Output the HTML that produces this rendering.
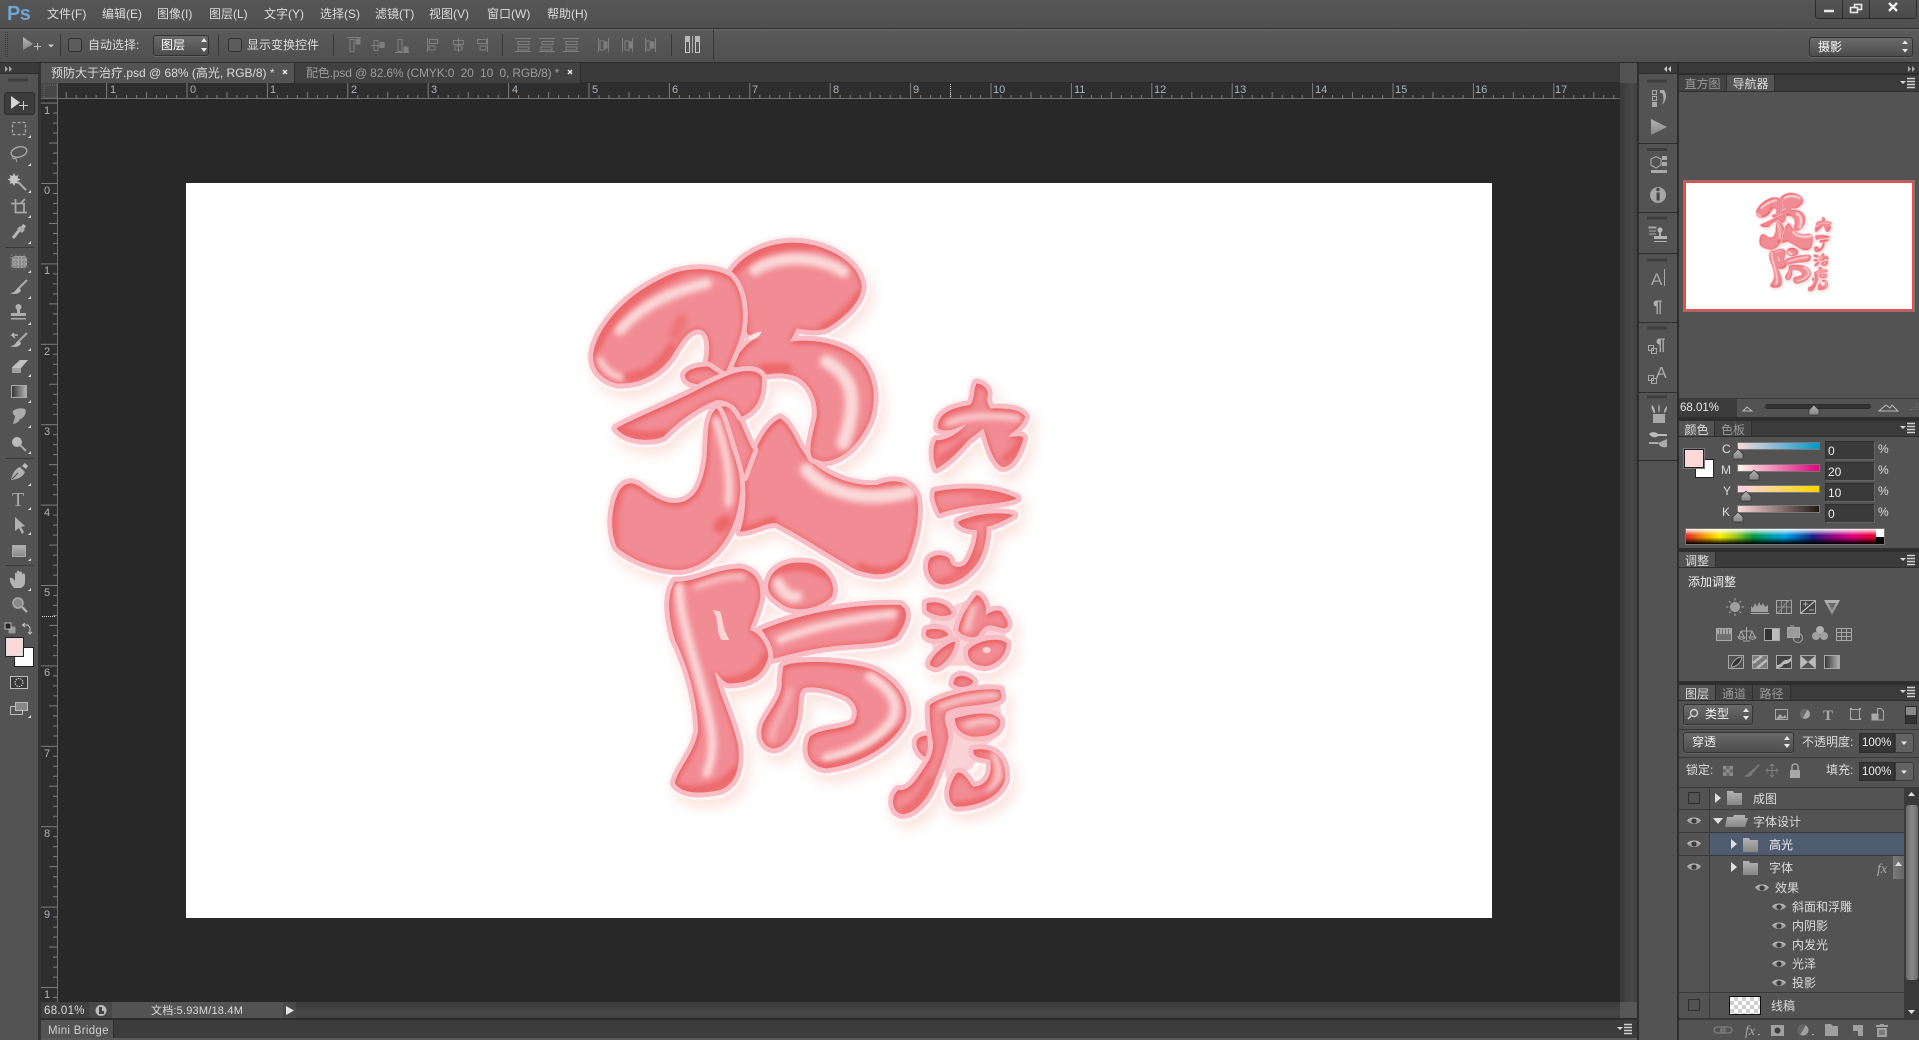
<!DOCTYPE html>
<html lang="zh"><head><meta charset="utf-8"><title>Photoshop</title>
<style>
html,body{margin:0;padding:0;background:#535353;width:1919px;height:1040px;overflow:hidden}
body{position:relative;font:12px/14px "Liberation Sans","WenQuanYi Zen Hei","Noto Sans CJK SC",sans-serif;color:#dcdcdc}
.a{position:absolute;box-sizing:border-box}
.t{position:absolute;white-space:pre;line-height:14px;height:14px}
.sel{position:absolute;box-sizing:border-box;border:1px solid #333;border-radius:3px;background:linear-gradient(#6a6a6a,#4d4d4d);box-shadow:0 1px 0 #666}
.cb{position:absolute;box-sizing:border-box;width:14px;height:14px;border:1px solid #2f2f2f;border-radius:3px;background:#5c5c5c}
.inp{position:absolute;box-sizing:border-box;background:#3a3a3a;border:1px solid #2f2f2f;border-bottom-color:#666;border-right-color:#666}
.tab{position:absolute;height:100%;top:0;box-sizing:border-box;border-right:1px solid #2e2e2e;text-align:center;line-height:18px;color:#9a9a9a;background:#434343}
.tab.on{background:#535353;color:#dedede}
.strip{position:absolute;left:1679px;width:240px;background:#3b3b3b;border-top:1px solid #2d2d2d;border-bottom:1px solid #2d2d2d;box-sizing:border-box}
.ln{position:absolute;background:#3a3a3a}
.o{fill:#f8bcc4;stroke:#f8bcc4;stroke-width:30;stroke-linejoin:round}
.f{fill:#f28c94;filter:url(#bv)}
.h{fill:#fff4f4;stroke:#fff4f4;stroke-width:48;stroke-linejoin:round}
.sd{fill:#f2a090;stroke:#f2a090;stroke-width:44;stroke-linejoin:round}
.fl{fill:#fad3d7;stroke:#f9cdd2;stroke-width:14;stroke-linejoin:round}
.L{fill:none;stroke:#fbd8d8;stroke-linecap:round;filter:url(#s1)}
.D{fill:none;stroke:#ec6668;stroke-linecap:round;filter:url(#s1)}
svg text{font-family:"Liberation Sans",sans-serif}
</style></head><body>

<!-- top bars -->
<div class="a" style="left:0;top:0;width:1919px;height:28px;background:linear-gradient(#565656,#505050)"></div>
<div class="a" style="left:0;top:28px;width:1919px;height:1px;background:#2e2e2e"></div>
<div class="a" style="left:0;top:29px;width:1919px;height:33px;background:linear-gradient(#5a5a5a,#505050);border-top:1px solid #686868"></div>
<div class="a" style="left:0;top:62px;width:1919px;height:1px;background:#2b2b2b"></div>

<div class="t" style="left:7px;top:2px;height:24px;font:bold 20px/24px 'Liberation Sans',sans-serif;color:#6fa3d4;letter-spacing:-.6px">Ps</div>
<div class="t" style="left:47px;top:7px">文件(F)</div>
<div class="t" style="left:102px;top:7px">编辑(E)</div>
<div class="t" style="left:157px;top:7px">图像(I)</div>
<div class="t" style="left:209px;top:7px">图层(L)</div>
<div class="t" style="left:264px;top:7px">文字(Y)</div>
<div class="t" style="left:320px;top:7px">选择(S)</div>
<div class="t" style="left:375px;top:7px">滤镜(T)</div>
<div class="t" style="left:429px;top:7px">视图(V)</div>
<div class="t" style="left:487px;top:7px">窗口(W)</div>
<div class="t" style="left:547px;top:7px">帮助(H)</div>

<!-- window buttons -->
<div class="a" style="left:1815px;top:-2px;width:102px;height:21px;border:1px solid #2c2c2c;border-radius:3px;background:linear-gradient(#555,#4a4a4a)"></div>
<div class="a" style="left:1842px;top:0;width:1px;height:18px;background:#2c2c2c"></div>
<div class="a" style="left:1869px;top:0;width:1px;height:18px;background:#2c2c2c"></div>

<!-- option bar -->
<div class="cb" style="left:68px;top:38px"></div>
<div class="t" style="left:88px;top:38px">自动选择:</div>
<div class="sel" style="left:153px;top:35px;width:56px;height:21px"></div>
<div class="t" style="left:161px;top:38px;color:#fff">图层</div>
<div class="cb" style="left:228px;top:38px"></div>
<div class="t" style="left:247px;top:38px">显示变换控件</div>
<div class="sel" style="left:1809px;top:37px;width:104px;height:20px"></div>
<div class="t" style="left:1818px;top:40px;color:#fff">摄影</div>

<!-- left tools column -->
<div class="a" style="left:0;top:63px;width:38px;height:977px;background:#535353"></div>
<div class="a" style="left:0;top:63px;width:38px;height:11px;background:#3a3a3a;border-bottom:1px solid #2d2d2d"></div>
<div class="a" style="left:38px;top:63px;width:3px;height:977px;background:#333"></div>
<div class="a" style="left:4px;top:92px;width:31px;height:23px;background:#3c3c3c;border:1px solid #2e2e2e;border-radius:3px"></div>
<div class="a" style="left:5px;top:247px;width:29px;height:1px;background:#3a3a3a"></div>
<div class="a" style="left:5px;top:458px;width:29px;height:1px;background:#3a3a3a"></div>
<div class="a" style="left:5px;top:565px;width:29px;height:1px;background:#3a3a3a"></div>
<div class="a" style="left:14px;top:647px;width:20px;height:20px;background:#fff;border:1px solid #222"></div>
<div class="a" style="left:5px;top:637px;width:19px;height:20px;background:#fbd9d9;border:1px solid #222;outline:1px solid #ddd;outline-offset:-2px"></div>

<!-- document tabs -->
<div class="a" style="left:41px;top:63px;width:1579px;height:20px;background:#3a3a3a;border-bottom:1px solid #2b2b2b"></div>
<div class="a" style="left:41px;top:63px;width:254px;height:20px;background:#535353;border-right:1px solid #2d2d2d"></div>
<div class="a" style="left:295px;top:63px;width:286px;height:20px;background:#414141;border-right:1px solid #2d2d2d"></div>
<div class="t" style="left:51px;top:66px;color:#dcdcdc;font-size:12px">预防大于治疗.psd @ 68% (高光, RGB/8) *</div>
<div class="t" style="left:306px;top:66px;color:#9c9c9c;font-size:12px;letter-spacing:-.15px">配色.psd @ 82.6% (CMYK:0&nbsp;&nbsp;20&nbsp;&nbsp;10&nbsp;&nbsp;0, RGB/8) *</div>

<!-- canvas area -->
<div class="a" style="left:41px;top:83px;width:1579px;height:919px;background:#282828"></div>
<div class="a" style="left:186px;top:183px;width:1306px;height:735px;background:#fff"></div>

<!-- rulers -->
<div class="a" style="left:41px;top:83px;width:1579px;height:16px;background:#2e2e2e"></div>
<div class="a" style="left:41px;top:83px;width:17px;height:919px;background:#2e2e2e"></div>
<div class="a" style="left:41px;top:83px;width:17px;height:16px;background:#474747"></div>
<div class="a" style="left:1620px;top:83px;width:17px;height:919px;background:linear-gradient(90deg,#3a3a3a,#484848 70%,#3f3f3f)"></div>
<div class="a" style="left:1637px;top:63px;width:2px;height:977px;background:#2d2d2d"></div>

<!-- ruler labels -->
<div style="color:#a8b4c0;font-size:11px">
<div class="t" style="left:110px;top:83px">1</div><div class="t" style="left:190px;top:83px">0</div><div class="t" style="left:270px;top:83px">1</div><div class="t" style="left:351px;top:83px">2</div><div class="t" style="left:431px;top:83px">3</div><div class="t" style="left:512px;top:83px">4</div><div class="t" style="left:592px;top:83px">5</div><div class="t" style="left:672px;top:83px">6</div><div class="t" style="left:752px;top:83px">7</div><div class="t" style="left:833px;top:83px">8</div><div class="t" style="left:913px;top:83px">9</div><div class="t" style="left:993px;top:83px">10</div><div class="t" style="left:1074px;top:83px">11</div><div class="t" style="left:1154px;top:83px">12</div><div class="t" style="left:1234px;top:83px">13</div><div class="t" style="left:1315px;top:83px">14</div><div class="t" style="left:1395px;top:83px">15</div><div class="t" style="left:1475px;top:83px">16</div><div class="t" style="left:1555px;top:83px">17</div>
<div class="t" style="left:44px;top:104px">1</div><div class="t" style="left:44px;top:184px">0</div><div class="t" style="left:44px;top:264px">1</div><div class="t" style="left:44px;top:345px">2</div><div class="t" style="left:44px;top:425px">3</div><div class="t" style="left:44px;top:506px">4</div><div class="t" style="left:44px;top:586px">5</div><div class="t" style="left:44px;top:666px">6</div><div class="t" style="left:44px;top:747px">7</div><div class="t" style="left:44px;top:827px">8</div><div class="t" style="left:44px;top:908px">9</div><div class="t" style="left:44px;top:988px">1</div>
</div>

<!-- status bar -->
<div class="a" style="left:41px;top:1002px;width:1579px;height:16px;background:linear-gradient(#3a3a3a,#484848 70%,#3f3f3f)"></div>
<div class="a" style="left:41px;top:1002px;width:255px;height:16px;background:#535353"></div>
<div class="a" style="left:41px;top:1002px;width:48px;height:16px;background:#3f3f3f"></div>
<div class="a" style="left:89px;top:1002px;width:23px;height:16px;background:#484848"></div>
<div class="a" style="left:283px;top:1002px;width:13px;height:16px;background:#4a4a4a"></div>
<div class="a" style="left:1620px;top:1002px;width:16px;height:16px;background:#575757"></div>
<div class="t" style="left:44px;top:1004px;font-size:11.5px;letter-spacing:.3px">68.01%</div>
<div class="t" style="left:151px;top:1004px;font-size:11px;letter-spacing:.2px">文档:5.93M/18.4M</div>
<div class="a" style="left:41px;top:1018px;width:1596px;height:2px;background:#2c2c2c"></div>
<div class="a" style="left:41px;top:1020px;width:1596px;height:18px;background:#3c3c3c"></div>
<div class="a" style="left:41px;top:1020px;width:73px;height:18px;background:#535353;border-right:1px solid #2d2d2d"></div>
<div class="t" style="left:48px;top:1024px;font-size:11.5px;color:#cfcfcf;letter-spacing:.3px">Mini Bridge</div>
<div class="a" style="left:41px;top:1038px;width:1596px;height:2px;background:#5a5a5a"></div>

<!-- icon dock -->
<div class="a" style="left:1639px;top:63px;width:38px;height:977px;background:#535353"></div>
<div class="a" style="left:1639px;top:63px;width:38px;height:11px;background:#3a3a3a;border-bottom:1px solid #2d2d2d"></div>
<div class="ln" style="left:1639px;top:143px;width:38px;height:1px;background:#2f2f2f"></div>
<div class="ln" style="left:1639px;top:212px;width:38px;height:1px;background:#2f2f2f"></div>
<div class="ln" style="left:1639px;top:253px;width:38px;height:1px;background:#2f2f2f"></div>
<div class="ln" style="left:1639px;top:322px;width:38px;height:1px;background:#2f2f2f"></div>
<div class="ln" style="left:1639px;top:392px;width:38px;height:1px;background:#2f2f2f"></div>
<div class="ln" style="left:1639px;top:460px;width:38px;height:1px;background:#2f2f2f"></div>
<div class="a" style="left:1677px;top:63px;width:2px;height:977px;background:#2d2d2d"></div>

<!-- right panels -->
<div class="a" style="left:1679px;top:63px;width:240px;height:977px;background:#535353"></div>
<div class="a" style="left:1679px;top:63px;width:240px;height:11px;background:#3a3a3a;border-bottom:1px solid #2d2d2d"></div>

<!-- navigator -->
<div class="strip" style="top:74px;height:18px">
 <div class="tab" style="left:0;width:48px">直方图</div>
 <div class="tab on" style="left:48px;width:48px">导航器</div>
</div>
<div class="a" style="left:1684px;top:181px;width:230px;height:130px;background:#fff;border:2px solid #f14a4a;outline:1px solid #7a7a7a"></div>
<div class="a" style="left:1679px;top:398px;width:240px;height:1px;background:#3a3a3a"></div>
<div class="a" style="left:1679px;top:399px;width:58px;height:18px;background:#3c3c3c"></div>
<div class="t" style="left:1680px;top:401px;font-size:11.5px;color:#e8e8e8">68.01%</div>
<div class="a" style="left:1765px;top:404px;width:106px;height:5px;background:#333;border:1px solid #2a2a2a;border-radius:3px"></div>
<div class="a" style="left:1679px;top:417px;width:240px;height:3px;background:#2f2f2f"></div>

<!-- color -->
<div class="strip" style="top:420px;height:17px">
 <div class="tab on" style="left:0;width:36px">颜色</div>
 <div class="tab" style="left:36px;width:37px">色板</div>
</div>
<div class="a" style="left:1695px;top:459px;width:19px;height:19px;background:#fff;border:1px solid #222"></div>
<div class="a" style="left:1684px;top:449px;width:20px;height:19px;background:#fbd9d9;border:1px solid #222;outline:1px solid #777"></div>
<div class="t" style="left:1722px;top:442px">C</div><div class="t" style="left:1721px;top:463px">M</div><div class="t" style="left:1723px;top:484px">Y</div><div class="t" style="left:1722px;top:505px">K</div>
<div class="a" style="left:1738px;top:443px;width:81px;height:6px;background:linear-gradient(90deg,#fbd9dc,#0099cc);outline:1px solid #777"></div>
<div class="a" style="left:1738px;top:465px;width:81px;height:6px;background:linear-gradient(90deg,#fff5ea,#e6007e);outline:1px solid #777"></div>
<div class="a" style="left:1738px;top:486px;width:81px;height:6px;background:linear-gradient(90deg,#fbd4ea,#ffd400);outline:1px solid #777"></div>
<div class="a" style="left:1738px;top:506px;width:81px;height:6px;background:linear-gradient(90deg,#fbd9da,#231815);outline:1px solid #777"></div>
<div class="inp" style="left:1825px;top:441px;width:50px;height:19px"></div>
<div class="inp" style="left:1825px;top:462px;width:50px;height:19px"></div>
<div class="inp" style="left:1825px;top:483px;width:50px;height:19px"></div>
<div class="inp" style="left:1825px;top:504px;width:50px;height:19px"></div>
<div class="t" style="left:1828px;top:444px;color:#eee">0</div><div class="t" style="left:1828px;top:465px;color:#eee">20</div><div class="t" style="left:1828px;top:486px;color:#eee">10</div><div class="t" style="left:1828px;top:507px;color:#eee">0</div>
<div class="t" style="left:1878px;top:442px">%</div><div class="t" style="left:1878px;top:463px">%</div><div class="t" style="left:1878px;top:484px">%</div><div class="t" style="left:1878px;top:505px">%</div>
<div class="a" style="left:1686px;top:529px;width:198px;height:15px;background:linear-gradient(180deg,rgba(255,255,255,.95),rgba(255,255,255,0) 42%,rgba(0,0,0,0) 55%,#000),linear-gradient(90deg,#e8262a 0%,#f39800 9%,#fff100 17%,#8fc31f 26%,#009944 34%,#00a0a0 42%,#00a0e9 50%,#0060b0 58%,#1d2088 64%,#920783 74%,#e4007f 84%,#e60033 94%,#e8262a 100%);outline:1px solid #777"></div>
<div class="a" style="left:1876px;top:529px;width:8px;height:8px;background:#fff"></div>
<div class="a" style="left:1876px;top:537px;width:8px;height:7px;background:#000"></div>
<div class="a" style="left:1679px;top:548px;width:240px;height:3px;background:#2f2f2f"></div>

<!-- adjustments -->
<div class="strip" style="top:551px;height:17px">
 <div class="tab on" style="left:0;width:37px">调整</div>
</div>
<div class="t" style="left:1688px;top:575px;color:#eee">添加调整</div>
<div class="a" style="left:1679px;top:681px;width:240px;height:3px;background:#2f2f2f"></div>

<!-- layers -->
<div class="strip" style="top:684px;height:17px">
 <div class="tab on" style="left:0;width:37px">图层</div>
 <div class="tab" style="left:37px;width:37px">通道</div>
 <div class="tab" style="left:74px;width:38px">路径</div>
</div>
<div class="sel" style="left:1683px;top:704px;width:70px;height:21px"></div>
<div class="t" style="left:1705px;top:707px;color:#eee">类型</div>
<div class="a" style="left:1905px;top:706px;width:12px;height:18px;background:#333;border:1px solid #2b2b2b"></div>
<div class="a" style="left:1906px;top:707px;width:10px;height:8px;background:#8a8a8a"></div>
<div class="a" style="left:1679px;top:729px;width:240px;height:1px;background:#3a3a3a"></div>
<div class="sel" style="left:1683px;top:732px;width:111px;height:21px"></div>
<div class="t" style="left:1692px;top:735px;color:#eee">穿透</div>
<div class="t" style="left:1802px;top:735px">不透明度:</div>
<div class="a" style="left:1859px;top:733px;width:36px;height:20px;background:#353535;border:1px solid #2d2d2d"></div>
<div class="a" style="left:1895px;top:733px;width:19px;height:20px;background:#626262;border:1px solid #3a3a3a;border-radius:0 3px 3px 0"></div>
<div class="t" style="left:1862px;top:736px;color:#eee;font-size:11.5px">100%</div>
<div class="a" style="left:1679px;top:757px;width:240px;height:1px;background:#3a3a3a"></div>
<div class="t" style="left:1686px;top:763px">锁定:</div>
<div class="t" style="left:1826px;top:763px">填充:</div>
<div class="a" style="left:1859px;top:762px;width:36px;height:19px;background:#353535;border:1px solid #2d2d2d"></div>
<div class="a" style="left:1895px;top:762px;width:19px;height:19px;background:#626262;border:1px solid #3a3a3a;border-radius:0 3px 3px 0"></div>
<div class="t" style="left:1862px;top:765px;color:#eee;font-size:11.5px">100%</div>
<div class="a" style="left:1679px;top:787px;width:240px;height:1px;background:#3a3a3a"></div>

<div class="a" style="left:1710px;top:833px;width:194px;height:22px;background:#4f5b6e"></div>
<div class="a" style="left:1709px;top:788px;width:1px;height:230px;background:#3a3a3a"></div>
<div class="a" style="left:1679px;top:809px;width:225px;height:1px;background:#3a3a3a"></div>
<div class="a" style="left:1679px;top:832px;width:225px;height:1px;background:#3a3a3a"></div>
<div class="a" style="left:1679px;top:855px;width:225px;height:1px;background:#3a3a3a"></div>
<div class="a" style="left:1679px;top:992px;width:225px;height:1px;background:#3a3a3a"></div>
<div class="a" style="left:1679px;top:1018px;width:240px;height:2px;background:#3a3a3a"></div>
<div class="a" style="left:1904px;top:788px;width:15px;height:230px;background:#3a3a3a"></div>
<div class="a" style="left:1906px;top:805px;width:12px;height:175px;background:linear-gradient(90deg,#6a6a6a,#8a8a8a 50%,#6a6a6a);border-radius:3px"></div>
<div class="a" style="left:1893px;top:856px;width:11px;height:23px;background:linear-gradient(90deg,#7a7a7a,#666)"></div>
<div class="cb" style="left:1688px;top:792px;width:12px;height:12px;border-radius:0;background:#535353"></div>
<div class="cb" style="left:1688px;top:999px;width:12px;height:12px;border-radius:0;background:#535353"></div>

<div class="t" style="left:1753px;top:792px">成图</div>
<div class="t" style="left:1753px;top:815px">字体设计</div>
<div class="t" style="left:1769px;top:838px;color:#f0f0f0">高光</div>
<div class="t" style="left:1769px;top:861px">字体</div>
<div class="t" style="left:1775px;top:881px">效果</div>
<div class="t" style="left:1792px;top:900px">斜面和浮雕</div>
<div class="t" style="left:1792px;top:919px">内阴影</div>
<div class="t" style="left:1792px;top:938px">内发光</div>
<div class="t" style="left:1792px;top:957px">光泽</div>
<div class="t" style="left:1792px;top:976px">投影</div>
<div class="t" style="left:1771px;top:999px">线稿</div>
<div class="a" style="left:1729px;top:996px;width:32px;height:19px;border:1px solid #111;background:repeating-conic-gradient(#cfcfcf 0 25%,#fff 0 50%) 0 0/8px 8px"></div>

<!-- ICONS + ART -->
<svg class="a" style="left:0;top:0" width="1919" height="1040" viewBox="0 0 1919 1040" xmlns="http://www.w3.org/2000/svg">
<defs>
<linearGradient id="gv" x1="0" y1="0" x2="0" y2="1"><stop offset="0" stop-color="#b4b4b4"/><stop offset="1" stop-color="#868686"/></linearGradient>
<linearGradient id="gh" x1="0" y1="0" x2="1" y2="0"><stop offset="0" stop-color="#333"/><stop offset="1" stop-color="#b5b5b5"/></linearGradient>
<pattern id="hr" patternUnits="userSpaceOnUse" x="186.5" y="83" width="80.4" height="16">
 <path d="M.5 0V16M10.5 12V16M20.5 12V16M30.5 12V16M40.5 9V16M50.5 12V16M60.5 12V16M70.5 12V16" stroke="#7c7c7c" fill="none"/>
</pattern>
<pattern id="vr" patternUnits="userSpaceOnUse" x="41" y="183" width="17" height="80.4">
 <path d="M0 .5H17M12 10.5H17M12 20.5H17M12 30.5H17M8 40.5H17M12 50.5H17M12 60.5H17M12 70.5H17" stroke="#7c7c7c" fill="none"/>
</pattern>
<filter id="bv" x="-25%" y="-25%" width="150%" height="150%" color-interpolation-filters="sRGB">
 <feGaussianBlur in="SourceAlpha" stdDeviation="8" result="b2"/>
 <feOffset in="b2" dx="3" dy="9" result="o1"/>
 <feComposite in="SourceAlpha" in2="o1" operator="out" result="i1"/>
 <feFlood flood-color="#ea5f60"/><feComposite in2="i1" operator="in" result="c1"/>
 <feOffset in="b2" dx="-3" dy="-6" result="o2"/>
 <feComposite in="SourceAlpha" in2="o2" operator="out" result="i2"/>
 <feFlood flood-color="#ee7476"/><feComposite in2="i2" operator="in" result="c2"/>
 <feMerge><feMergeNode in="SourceGraphic"/><feMergeNode in="c2"/><feMergeNode in="c1"/></feMerge>
</filter>
<filter id="bl" x="-10%" y="-10%" width="120%" height="120%"><feGaussianBlur stdDeviation="6"/></filter>
<filter id="s1" filterUnits="userSpaceOnUse" x="0" y="0" width="1500" height="1200"><feGaussianBlur stdDeviation="9"/></filter>

<path id="p_e" d="M660,595 C700,620 710,680 750,720 C800,770 880,800 950,795 C1000,775 1050,780 1070,830 C1080,880 1070,950 1040,1020 C1000,1070 950,1070 890,1050 C800,1000 730,950 650,910 C620,905 590,930 540,935 C560,880 560,800 550,760 C590,690 610,620 660,595Z"/>
<path id="p_x" d="M480,560 L520,560 C545,610 565,670 580,690 L550,770 C530,730 510,640 480,560Z"/>
<path id="p_d" d="M170,830 C185,790 210,780 240,800 C280,830 320,860 370,845 C410,830 430,790 440,710 C445,640 440,590 470,565 C490,590 500,640 520,700 C540,760 550,800 530,880 C510,960 450,1040 360,1050 C280,1050 200,1010 170,980 C150,930 155,870 170,830Z"/>
<path id="p_b" d="M515,155 C560,90 650,60 730,70 C810,80 900,130 905,200 C905,240 860,290 800,325 C770,335 740,330 710,325 L690,365 C760,355 850,370 900,420 C945,470 950,540 930,600 C900,670 850,720 790,725 L760,715 C740,700 760,640 770,590 C775,540 750,490 710,470 C670,455 640,460 610,465 C590,440 550,445 520,440 C530,400 560,370 600,345 C570,350 560,345 560,330 C565,270 550,200 515,155Z"/>
<path id="p_a" d="M100,400 C110,330 190,220 340,160 C400,140 470,145 510,170 C545,205 555,270 545,330 C535,380 510,420 495,465 L440,440 C450,400 455,345 425,330 C390,320 365,360 335,410 C300,460 240,495 170,490 C130,480 95,450 100,400Z"/>
<path id="p_a2" d="M375,465 C385,445 420,440 445,440 L490,470 L440,492 C410,495 375,490 375,465Z"/>
<path id="p_c" d="M170,625 C230,590 340,550 440,495 L495,470 C540,450 590,445 605,470 C610,530 590,570 545,590 C530,560 510,540 470,540 C420,560 370,590 310,650 C280,665 200,665 170,625Z"/>
<path id="p_da" d="M1250,490 C1275,495 1290,510 1280,540 L1290,565 C1330,565 1380,565 1395,590 C1390,620 1350,640 1345,650 C1370,650 1385,645 1390,655 C1375,710 1350,745 1325,740 C1295,720 1285,670 1270,625 L1225,660 C1190,700 1160,730 1130,745 C1115,710 1120,670 1130,660 C1150,665 1200,640 1220,610 C1190,625 1160,640 1135,625 C1130,590 1160,565 1230,555 C1245,540 1240,510 1250,490Z"/>
<path id="p_y1" d="M1125,815 C1200,800 1300,800 1370,835 C1330,855 1220,850 1140,880 C1125,850 1120,830 1125,815Z"/>
<path id="p_y2" d="M1195,905 C1250,880 1310,875 1360,885 C1330,905 1300,915 1280,920 C1280,960 1270,1020 1230,1055 C1200,1085 1150,1105 1125,1085 C1100,1065 1100,1030 1110,1015 C1130,1000 1160,1005 1170,1020 C1170,1040 1200,1050 1220,1030 C1240,1000 1255,950 1250,930 C1220,930 1195,920 1195,905Z"/>

<path id="p_i" d="M430,380 C450,360 620,360 700,390 C780,430 810,490 795,540 C770,600 680,670 560,685 C510,680 490,640 510,590 C540,565 600,570 640,550 C660,520 650,490 620,470 C580,450 520,435 490,445 C470,460 480,510 470,540 C460,590 430,625 400,625 C370,620 355,590 370,550 C395,500 430,470 425,420Z"/>
<path id="p_h" d="M365,270 C480,220 640,190 780,195 C810,210 800,250 770,290 C740,310 680,310 620,315 C530,320 440,345 385,360 C395,330 385,290 365,270Z"/>
<path id="p_f" d="M105,125 C180,125 210,90 300,85 C350,95 365,130 360,180 C350,220 335,250 330,270 C360,280 385,320 385,350 C370,410 330,430 265,430 C240,420 235,400 225,395 C230,450 280,540 295,620 C300,680 290,730 240,750 C190,760 130,765 105,730 C110,690 165,640 175,570 C170,450 130,350 105,300 C90,250 75,170 105,125Z"/>
<path id="p_g" d="M385,130 C395,80 450,60 510,70 C560,85 590,130 575,170 C540,205 470,220 430,195 C400,175 380,160 385,130Z"/>
<path id="p_z1" d="M860,190 C890,180 930,195 935,220 C920,235 870,225 860,210Z"/>
<path id="p_z2" d="M860,270 C890,262 920,270 925,285 C900,300 865,300 858,285Z"/>
<path id="p_z3" d="M870,370 C880,340 920,310 945,305 C945,340 905,385 885,382 C875,378 868,375 870,370Z"/>
<path id="p_z4" d="M1010,165 C1030,170 1045,210 1035,225 C1060,210 1085,205 1090,225 C1110,250 1105,265 1090,265 C1060,260 1040,240 1015,285 C1000,300 960,285 955,270 C960,230 990,190 1010,165Z"/>
<path id="p_z5" d="M985,330 C1010,300 1080,290 1100,310 C1100,350 1060,380 1030,378 C1000,375 980,360 985,330Z"/>
<path id="p_l1" d="M945,415 C960,400 990,410 1000,425 C990,445 950,445 940,430Z"/>
<path id="p_l2" d="M870,495 C900,470 1010,440 1080,450 C1085,470 1090,475 1070,485 C1010,500 950,495 920,515 C905,540 925,560 925,595 C915,640 905,670 885,720 C860,790 810,830 780,820 C755,810 752,770 775,750 C805,755 825,725 845,695 C865,665 885,640 878,600 C870,560 868,520 870,495Z"/>
<path id="p_l3" d="M945,535 C1000,520 1060,510 1080,540 C1085,570 1060,590 1000,590 C970,585 945,570 945,535Z"/>
<path id="p_l4" d="M1000,630 C1050,620 1100,640 1095,720 C1075,780 1000,800 950,800 C920,790 920,740 950,700 C970,690 985,725 1000,740 C1040,740 1060,700 1050,660 C1030,650 1000,660 1000,630Z"/>
<path id="p_l5" d="M845,590 C870,580 900,600 900,630 C890,660 850,660 835,630 C825,610 830,595 845,590Z"/>
<path id="p_fz" d="M880,230 L1000,180 L1090,240 L1090,320 L1030,370 L895,370 L875,280Z"/>
<path id="p_fl" d="M900,505 L1000,500 L1075,500 L1075,580 L1020,620 L990,680 L925,710 L910,640Z"/>

<clipPath id="c_e"><use href="#p_e"/></clipPath><clipPath id="c_d"><use href="#p_d"/></clipPath><clipPath id="c_b"><use href="#p_b"/></clipPath><clipPath id="c_a"><use href="#p_a"/></clipPath><clipPath id="c_c"><use href="#p_c"/></clipPath><clipPath id="c_da"><use href="#p_da"/></clipPath><clipPath id="c_y1"><use href="#p_y1"/></clipPath><clipPath id="c_y2"><use href="#p_y2"/></clipPath>
<clipPath id="c_i"><use href="#p_i"/></clipPath><clipPath id="c_h"><use href="#p_h"/></clipPath><clipPath id="c_f"><use href="#p_f"/></clipPath><clipPath id="c_g"><use href="#p_g"/></clipPath><clipPath id="c_l4"><use href="#p_l4"/></clipPath><clipPath id="c_l3"><use href="#p_l3"/></clipPath><clipPath id="c_l2"><use href="#p_l2"/></clipPath><clipPath id="c_z4"><use href="#p_z4"/></clipPath>

<g id="allz9">
 <use href="#p_e"/><use href="#p_x"/><use href="#p_d"/><use href="#p_b"/><use href="#p_a"/><use href="#p_a2"/><use href="#p_c"/><use href="#p_da"/><use href="#p_y1"/><use href="#p_y2"/>
</g>
<g id="allz10">
 <use href="#p_i"/><use href="#p_h"/><use href="#p_f"/><use href="#p_g"/><use href="#p_fz"/><use href="#p_fl"/><use href="#p_z1"/><use href="#p_z2"/><use href="#p_z3"/><use href="#p_z4"/><use href="#p_z5"/><use href="#p_l1"/><use href="#p_l2"/><use href="#p_l3"/><use href="#p_l4"/><use href="#p_l5"/>
</g>

<g id="art">
 <g filter="url(#bl)" opacity=".28" transform="translate(5 8)">
  <g transform="translate(560 220) scale(.33333)" class="sd"><use href="#allz9"/></g>
  <g transform="translate(640 540) scale(.33333)" class="sd"><use href="#allz10"/></g>
 </g>
 <g transform="translate(560 220) scale(.33333)" class="h"><use href="#allz9"/></g>
 <g transform="translate(640 540) scale(.33333)" class="h"><use href="#allz10"/></g>
 <g transform="translate(640 540) scale(.33333)">
  <use class="o" href="#p_i"/><use class="f" href="#p_i"/>
  <g clip-path="url(#c_i)"><path class="L" stroke-width="30" d="M690,410 C760,450 785,500 750,550 C710,600 640,640 560,655"/><path class="D" stroke-width="22" d="M530,680 C610,680 710,640 780,570"/><path class="L" stroke-width="14" d="M395,600 C400,550 440,500 450,450" opacity=".6"/></g>
  <use class="o" href="#p_h"/><use class="f" href="#p_h"/>
  <g clip-path="url(#c_h)"><path class="L" stroke-width="24" d="M420,300 C520,260 640,235 760,222"/><path class="D" stroke-width="18" d="M790,215 C790,250 770,285 740,300"/></g>
  <use class="o" href="#p_f"/><use class="f" href="#p_f"/>
  <g clip-path="url(#c_f)"><path class="L" stroke-width="26" d="M118,140 C115,220 165,360 200,500 C220,580 225,640 200,700"/><path class="L" stroke-width="16" d="M170,140 C210,125 260,105 310,110" opacity=".8"/><path class="D" stroke-width="24" d="M115,745 C170,755 250,750 285,690"/><path class="D" stroke-width="24" d="M255,425 C310,425 365,395 375,350"/></g>
  <use class="o" href="#p_g"/><use class="f" href="#p_g"/>
  <g clip-path="url(#c_g)"><path class="L" stroke-width="34" d="M415,130 C430,160 450,175 470,170"/><path class="D" stroke-width="26" d="M430,85 C470,70 520,80 550,100"/></g>
  <path d="M218,210 L240,215 C250,235 245,260 268,300 L245,300 C225,270 240,240 218,210Z" fill="#fbd4d4"/>
  <use class="fl" href="#p_fz"/><use class="fl" href="#p_fl"/>
  <use class="o" href="#p_z1"/><use class="f" href="#p_z1"/><use class="o" href="#p_z2"/><use class="f" href="#p_z2"/><use class="o" href="#p_z3"/><use class="f" href="#p_z3"/><use class="o" href="#p_z4"/><use class="f" href="#p_z4"/>
  <g clip-path="url(#c_z4)"><path class="L" stroke-width="14" d="M1000,200 C990,230 985,255 980,270"/></g>
  <use class="o" href="#p_z5"/><use class="f" href="#p_z5"/>
  <ellipse cx="1040" cy="330" rx="12" ry="9" fill="#fbd4d4"/>
  <use class="o" href="#p_l5"/><use class="f" href="#p_l5"/><use class="o" href="#p_l1"/><use class="f" href="#p_l1"/><use class="o" href="#p_l2"/><use class="f" href="#p_l2"/>
  <g clip-path="url(#c_l2)"><path class="L" stroke-width="14" d="M900,500 C960,475 1030,465 1070,465" /><path class="D" stroke-width="18" d="M790,810 C820,800 850,770 870,720"/></g>
  <use class="o" href="#p_l4"/><use class="f" href="#p_l4"/>
  <g clip-path="url(#c_l4)"><path class="L" stroke-width="16" d="M1060,640 C1085,680 1080,730 1050,755"/><path class="D" stroke-width="20" d="M950,795 C1000,795 1060,775 1090,735"/></g>
  <use class="o" href="#p_l3"/><use class="f" href="#p_l3"/>
  <g clip-path="url(#c_l3)"><path class="L" stroke-width="14" d="M980,555 C1010,545 1040,540 1065,545"/></g>
 </g>
 <g transform="translate(560 220) scale(.33333)">
  <use class="o" href="#p_e"/><use class="f" href="#p_e"/>
  <g clip-path="url(#c_e)"><path class="L" stroke-width="40" d="M740,750 C800,820 920,850 1050,815"/><path class="D" stroke-width="24" d="M1050,1020 C1000,1060 950,1060 900,1040"/><path class="D" stroke-width="22" d="M545,930 C590,925 620,905 640,900"/></g>
  <use class="o" href="#p_x"/><use class="f" href="#p_x"/>
  <use class="o" href="#p_d"/><use class="f" href="#p_d"/>
  <g clip-path="url(#c_d)"><path class="L" stroke-width="22" d="M468,600 C495,680 515,760 505,850"/><path class="D" stroke-width="40" d="M480,920 L495,905"/><path class="D" stroke-width="14" d="M180,815 C170,860 165,910 172,965" opacity=".7"/></g>
  <use class="o" href="#p_b"/><use class="f" href="#p_b"/>
  <g clip-path="url(#c_b)"><path class="L" stroke-width="34" d="M585,150 C650,105 770,105 850,155"/><path class="D" stroke-width="20" d="M530,150 C590,85 680,68 750,76"/><path class="D" stroke-width="22" d="M895,225 C870,270 830,300 790,322"/><path class="L" stroke-width="40" d="M800,425 C880,470 895,540 850,670" stroke="#fce0e0"/><path class="D" stroke-width="30" d="M610,445 L680,445"/></g>
  <use class="o" href="#p_a"/><use class="f" href="#p_a"/>
  <g clip-path="url(#c_a)"><path class="L" stroke-width="32" d="M180,330 C240,260 330,215 440,190"/><path class="D" stroke-width="20" d="M110,385 C150,285 250,210 360,160"/><path class="L" stroke-width="18" d="M120,420 C135,450 160,470 185,472"/><path class="D" stroke-width="26" d="M205,470 C260,470 305,430 335,380"/><path class="D" stroke-width="36" d="M365,300 L345,340" opacity=".6"/></g>
  <use class="o" href="#p_a2"/><use class="f" href="#p_a2"/><use class="o" href="#p_c"/><use class="f" href="#p_c"/>
  <g clip-path="url(#c_c)"><path class="D" stroke-width="24" d="M185,630 C230,650 280,650 315,640"/></g>
  <path d="M565,350 C580,340 595,335 605,335 C600,350 585,360 565,362Z" fill="#fbe0e0"/>
  <use class="o" href="#p_da"/><use class="f" href="#p_da"/>
  <g clip-path="url(#c_da)"><path class="L" stroke-width="16" d="M1165,610 C1220,585 1300,585 1375,595"/><path class="D" stroke-width="20" d="M1140,720 C1170,700 1195,690 1215,665"/><path class="D" stroke-width="22" d="M1335,715 C1360,700 1375,680 1385,665"/></g>
  <use class="o" href="#p_y1"/><use class="f" href="#p_y1"/>
  <g clip-path="url(#c_y1)"><path class="D" stroke-width="12" d="M1240,825 C1290,825 1330,830 1365,835"/></g>
  <use class="o" href="#p_y2"/><use class="f" href="#p_y2"/>
  <g clip-path="url(#c_y2)"><path class="D" stroke-width="14" d="M1205,905 C1260,890 1310,885 1350,888"/><path class="D" stroke-width="16" d="M1130,1085 C1170,1085 1220,1050 1250,1000"/></g>
 </g>
</g>

<g id="eye"><path d="M-6.5 0C-4 -4 4 -4 6.5 0C4 4 -4 4 -6.5 0Z" fill="#a0a0a0"/><circle r="2.6" fill="#3c3c3c"/><path d="M-6.5 0C-4 -4 4 -4 6.5 0" fill="none" stroke="#c0c0c0"/></g>
<g id="fold"><path d="M0 -7H6L7 -5H15V7H0Z" fill="url(#gv)"/></g>
<path id="tr" d="M-3 -5L3 0L-3 5Z" fill="#e0e0e0"/>
<path id="cn" d="M3 0V3H0Z" fill="#d8d8d8"/>
<g id="grip"><path d="M-10 -1.5V1.5M-8 -1.5V1.5M-6 -1.5V1.5M-4 -1.5V1.5M-2 -1.5V1.5M0 -1.5V1.5M2 -1.5V1.5M4 -1.5V1.5M6 -1.5V1.5M8 -1.5V1.5" stroke="#2a2a2a" stroke-width="1"/></g>
<g id="pm"><path d="M-11 -2H-5L-8 1Z" fill="#d8d8d8"/><path d="M-4 -4.5H4M-4 -1.5H4M-4 1.5H4M-4 4.5H4" stroke="#d0d0d0" stroke-width="1.4"/></g>
<g id="thumb"><path d="M0 -5L5 0V5H-5V0Z" fill="url(#gv)" stroke="#333" stroke-width=".7"/></g>
<g id="ud"><path d="M0 -6L3 -2H-3ZM0 6L3 2H-3Z" fill="#e8e8e8"/></g>
</defs>

<rect x="58" y="83" width="1562" height="16" fill="url(#hr)"/>
<rect x="41" y="99" width="17" height="903" fill="url(#vr)"/>
<path d="M41 98.5H1620M57.5 83V1002" stroke="#6e6e6e"/>
<path d="M950.5 84V98M42 616.5H56" stroke="#ddd" stroke-dasharray="1 1"/>
<rect x="44" y="85" width="13" height="13" fill="none" stroke="#6a6a6a" stroke-dasharray="1 1"/>

<!-- window -->
<path d="M1824 11H1834" stroke="#e8e8e8" stroke-width="2.5"/>
<g fill="none" stroke="#e8e8e8" stroke-width="1.6"><rect x="1854.5" y="4.5" width="7" height="5"/><rect x="1850.5" y="7.5" width="7" height="5" fill="#505050"/></g>
<path d="M1889 3L1897 11M1897 3L1889 11" stroke="#eee" stroke-width="2.4"/>

<!-- option bar icons -->
<g fill="url(#gv)">
<path d="M23 37V50L33 44Z"/>
<path d="M34 46.5h7M37.5 43v7" stroke="#bbb" fill="none"/>
<path d="M48 44.5h6L51 47.5Z" fill="#ccc"/>
</g>
<path d="M5.5 32V58M7.5 32V58" stroke="#3a3a3a" stroke-dasharray="1 1"/>
<path d="M60.500 34V56M218.500 34V56M333.500 34V56M502.500 34V56M671.500 34V56M713.500 30V61" stroke="#383838"/>
<path d="M201 42L204 38L207 42ZM201 48L204 52L207 48Z" fill="#e8e8e8"/>
<path d="M1902 44L1905 40.5L1908 44ZM1902 49L1905 52.5L1908 49Z" fill="#e8e8e8"/>
<g fill="none" stroke="#7f7f7f">
 <path d="M347 37.5H361M350 39.5h4v12h-4z"/><path d="M356 39h4v5h-4z" fill="#7f7f7f"/>
 <path d="M371 45.5H385M374 40.5h4v10h-4z"/><path d="M380 42.5h4v5h-4z" fill="#7f7f7f"/>
 <path d="M395 52.5H409M398 39.5h4v12h-4z"/><path d="M404 47h4v5h-4z" fill="#7f7f7f"/>
 <path d="M427.5 38V52M429.5 39.5h8v4h-8z"/><path d="M429 46h6v4h-6z" stroke="#7f7f7f"/>
 <path d="M458.5 38V52M453.5 40.5h10v4h-10z"/><path d="M455 46h7v4h-7z"/>
 <path d="M487.5 38V52M477.5 39.5h9v4h-9z"/><path d="M480 46h6v4h-6z"/>
 <path d="M515 38.5H531M515 51.5H531M518 41.5h11v3h-11z"/><path d="M518 47h11v3h-11z"/>
 <path d="M539 38.5H555M539 51.5H555M542 41.5h11v3h-11z"/><path d="M541 47h11v3h-11z"/>
 <path d="M563 38.5H579M563 51.5H579M566 41.5h11v3h-11z"/><path d="M566 47h11v3h-11z"/>
 <path d="M598.5 38V52M608.5 38V52M600 41h4v9h-4z"/><path d="M604 42h3v6h-3z" fill="#7f7f7f"/>
 <path d="M622.5 38V52M632.5 38V52M625 41h4v9h-4z"/><path d="M629 42h3v6h-3z" fill="#7f7f7f"/>
 <path d="M645.5 38V52M655.5 38V52M646 41h4v9h-4z"/><path d="M650 42h4v6h-4z" fill="#7f7f7f"/>
</g>
<g fill="none" stroke="#c8c8c8">
 <rect x="685.5" y="36.5" width="4" height="16"/><rect x="695.5" y="36.5" width="4" height="16"/>
</g>
<path d="M685 36h5v6h-5zM695 36h5v6h-5z" fill="#b8b8b8"/><path d="M692.5 36V53" stroke="#aaa"/>

<!-- tab close -->
<path d="M283 70l4 4M287 70l-4 4M568 70l4 4M572 70l-4 4" stroke="#e8e8e8" stroke-width="1.5"/>

<!-- collapse arrows -->
<path d="M5 66l3 3-3 3zM9 66l3 3-3 3z" fill="#aaa"/>
<path d="M1671 66l-3 3 3 3zM1667 66l-3 3 3 3z" fill="#ccc"/>
<path d="M1908 66l3 3-3 3zM1912 66l3 3-3 3z" fill="#aaa"/>

<!-- toolbar grip -->
<use href="#grip" x="19" y="80"/>

<!-- tools -->
<g fill="url(#gv)" stroke="none">
 <path d="M11 96V109L20 102.5Z" fill="#d6d6d6"/><path d="M19 105.5H28M23.5 101V110" stroke="#ccc" fill="none"/>
 <rect x="12.5" y="122.5" width="13" height="12" fill="none" stroke="#a8a8a8" stroke-width="1.300" stroke-dasharray="3 2"/>
 <use href="#cn" x="28" y="135"/>
 <ellipse cx="19" cy="152" rx="8" ry="5" fill="none" stroke="#a8a8a8" stroke-width="1.400" transform="rotate(-15 19 152)"/><path d="M14 156c-3 2 0 4 1 2s1 3 2 4" fill="none" stroke="#a8a8a8"/>
 <use href="#cn" x="28" y="163"/>
 <path d="M14 173l1.500 3 3-1-1 3 3 1.500-3 1.500 1 3-3-1-1.500 3-1.500-3-3 1 1-3-3-1.500 3-1.500-1-3 3 1z" fill="#c4c4c4"/><path d="M18 182L26 190" stroke="#a8a8a8" stroke-width="2.200"/>
 <use href="#cn" x="28" y="190"/>
 <path d="M11 203.500H24V213M15.500 199V212.500H27M25 199L21 203" fill="none" stroke="#a8a8a8" stroke-width="1.800"/>
 <use href="#cn" x="28" y="215"/>
 <path d="M13 238L21 228" stroke="#b8b8b8" stroke-width="3"/><path d="M20 226l5 4-3 3-5-4z" fill="#aaa"/><path d="M23 224l3 2-2 3-3-2z" fill="#bbb"/>
 <use href="#cn" x="28" y="241"/>
 <rect x="12" y="256" width="15" height="12" rx="3" fill="#a0a0a0"/><path d="M12 254V270M16 254V270M20 254V270M24 254V270M10 258H29M10 262H29M10 266H29" stroke="#7a7a7a" stroke-dasharray="2 1" fill="none"/>
 <use href="#cn" x="28" y="270"/>
 <path d="M27 280L18 289" stroke="#a8a8a8" stroke-width="2.200"/><path d="M19 288c-3 0-3 3-5 4-2 1-3 1-4 1 4 2 10 1 11-3z" fill="#b8b8b8"/>
 <use href="#cn" x="28" y="296"/>
 <circle cx="18.500" cy="307" r="3" fill="#b0b0b0"/><path d="M17 308h3v5h-3zM11 313h15v3H11zM11 318h15v1.500H11z" fill="#adadad"/>
 <use href="#cn" x="28" y="322"/>
 <path d="M27 333L18 342" stroke="#a8a8a8" stroke-width="2.200"/><path d="M19 341c-3 0-3 3-5 4-2 1-3 1-4 1 4 2 10 1 11-3z" fill="#b8b8b8"/><path d="M18 335H12L14 333M12 335L15 338" fill="none" stroke="#b8b8b8" stroke-width="1.400"/>
 <use href="#cn" x="28" y="348"/>
 <path d="M12 367L20 360H28L21 368V373H12Z" fill="#a0a0a0"/><path d="M20 360H28L21 368H12Z" fill="#c0c0c0"/>
 <use href="#cn" x="28" y="374"/>
 <rect x="11.500" y="385.500" width="15" height="12" fill="url(#gh)" stroke="#aaa"/>
 <use href="#cn" x="28" y="400"/>
 <path d="M13 411c3-3 9-3 12-2 2 2 0 9-5 10-1 3-5 5-7 5 1-4 2-6 2-8-2-2-3-3-2-5z" fill="#ababab"/>
 <use href="#cn" x="28" y="425"/>
 <circle cx="17" cy="442" r="5" fill="#bbb"/><path d="M20 445L26 451" stroke="#a8a8a8" stroke-width="2"/>
 <use href="#cn" x="28" y="451"/>
 <path d="M11 480C12 474 15 469 20 467L25 472C23 477 18 479 11 480Z" fill="#b0b0b0"/><path d="M22 466L25 463 28 466 26 469Z" fill="#bbb"/><path d="M12 479L18 473" stroke="#4a4a4a"/>
 <use href="#cn" x="28" y="483"/>
 <text x="12" y="506" font-size="20" fill="#a8a8a8" style="font-family:'Liberation Serif',serif">T</text>
 <use href="#cn" x="28" y="507"/>
 <path d="M15 517V531L19 528L22 534L24 532L21 527L25 526Z" fill="#b0b0b0"/>
 <use href="#cn" x="28" y="532"/>
 <rect x="12.500" y="545.500" width="13" height="11" fill="url(#gv)" stroke="#aaa"/>
 <use href="#cn" x="28" y="558"/>
 <path d="M10 578c1-1 3 0 5 3V574c0-2 2-2 2 0V572c0-2 2-2 2 0v1c0-2 3-2 3 0v2c0-2 3-2 3 0v7c0 3-2 5-4 6h-7c-2-2-5-7-4-10z" fill="#b4b4b4"/>
 <use href="#cn" x="28" y="588"/>
 <circle cx="18" cy="603" r="5" fill="#8a8a8a" stroke="#aaa" stroke-width="1.500"/><path d="M22 607L27 612" stroke="#b0b0b0" stroke-width="2.400"/>
 <rect x="8.500" y="626.500" width="7" height="7" fill="#999"/><rect x="5" y="623" width="6" height="6" fill="#222" stroke="#bbb"/>
 <path d="M23 625H28L30 628V634M25 623L22.500 625 25 627M28 632L30 634 32 632" fill="none" stroke="#c4c4c4"/>
 <rect x="10.500" y="676.500" width="17" height="12" fill="#3a3a3a" stroke="#bdbdbd"/><circle cx="19" cy="682.500" r="4" fill="none" stroke="#ddd" stroke-dasharray="1.500 1"/>
 <rect x="10.500" y="706.500" width="12" height="8" fill="#555" stroke="#bbb"/><rect x="15.500" y="702.500" width="12" height="8" fill="#888" stroke="#bbb"/>
 <use href="#cn" x="28" y="715"/>
</g>

<!-- dock icons -->
<use href="#grip" x="1658" y="81"/><use href="#grip" x="1658" y="149.500"/><use href="#grip" x="1658" y="218"/><use href="#grip" x="1658" y="260"/><use href="#grip" x="1658" y="328"/><use href="#grip" x="1658" y="397"/>
<g fill="url(#gv)">
 <rect x="1652.500" y="90.500" width="4" height="4" fill="none" stroke="#aaa"/><rect x="1652.500" y="96.500" width="4" height="4" fill="none" stroke="#aaa"/><rect x="1652" y="102" width="5" height="5" fill="#a8a8a8"/>
 <path d="M1660 90H1664C1667 94 1667 100 1662 105C1664 100 1664 96 1662 93H1660Z" fill="#aaa"/>
 <path d="M1651 119V135L1667 127Z"/>
 <path d="M1651 159L1656 156.500L1661 159V165L1656 168L1651 165Z" fill="none" stroke="#b0b0b0"/><path d="M1662 156h5v4h-5zM1662 162h5v4h-5z" fill="#aaa"/><path d="M1651 170h16v3h-16z" fill="#aaa"/>
 <circle cx="1658" cy="195" r="8" fill="#a6a6a6"/>
 <path d="M1649 228h7v-1h-7zM1649 231h7M1649 234h7" stroke="#aaa" fill="none"/><circle cx="1660" cy="230" r="2.500" fill="#bbb"/><path d="M1659 232h2v4h-2zM1654 236h13v3h-13zM1654 241h13v1h-13z" fill="#b4b4b4"/>
 <rect x="1651.500" y="348.500" width="5" height="5" fill="none" stroke="#aaa"/><rect x="1648.500" y="345.500" width="5" height="5" fill="none" stroke="#aaa"/>
 <rect x="1651.500" y="378.500" width="5" height="5" fill="none" stroke="#aaa"/><rect x="1648.500" y="375.500" width="5" height="5" fill="none" stroke="#aaa"/>
 <path d="M1653 414h12v9h-12z" fill="#a8a8a8"/><path d="M1654 413c-2-3-3-6-2-8 2 2 3 5 3 8zM1659 413c-1-3-1-6 0-9 1 3 1 6 0 9zM1664 413c0-3 1-5 3-7 0 3-1 6-3 7z" fill="#bbb"/>
 <path d="M1649 434c3-3 7-2 9 0h9v2h-9c-2 2-6 2-9-2z" fill="#bbb"/><path d="M1649 442h9v2h-9zM1658 443l9-4v8c-5 1-8-1-9-4z" fill="#aaa"/>
</g>
<circle cx="1658" cy="189.500" r="1.700" fill="#444"/><rect x="1656.600" y="192.500" width="3" height="8" fill="#444"/>
<text x="1651" y="285" font-size="17" fill="#a6a6a6">A</text><path d="M1664.500 269V286" stroke="#aaa"/>
<text x="1653" y="312" font-size="17" font-weight="bold" fill="#b0b0b0">¶</text>
<text x="1656" y="350" font-size="17" font-weight="bold" fill="#b0b0b0">¶</text>
<text x="1656" y="378" font-size="16" fill="#b0b0b0">A</text>

<!-- panel menus -->
<use href="#pm" x="1911" y="83"/><use href="#pm" x="1911" y="428"/><use href="#pm" x="1911" y="560"/><use href="#pm" x="1911" y="692"/><use href="#pm" x="1628" y="1029"/>

<!-- navigator thumb -->
<svg x="1686" y="183" width="226" height="126" viewBox="186 183 1306 735" preserveAspectRatio="none"><use href="#art"/></svg>
<!-- zoom row -->
<path d="M1743 411L1747 407L1752 411Z" fill="none" stroke="#bbb"/><use href="#thumb" x="1814" y="410"/>
<path d="M1879 411L1886 405L1890 408L1892 405L1898 411Z" fill="none" stroke="#bbb"/>
<path d="M1917 403V411M1914 407V411M1911 409V411" stroke="#777" stroke-dasharray="1 1"/>

<!-- colour thumbs -->
<use href="#thumb" x="1738" y="454"/><use href="#thumb" x="1754" y="475"/><use href="#thumb" x="1746" y="496"/><use href="#thumb" x="1738" y="517"/>

<!-- adjustments -->
<g fill="none" stroke="#a8a8a8">
 <circle cx="1735" cy="607" r="4.500" fill="#9c9c9c"/><path d="M1735 598V600.500M1735 613.500V616M1726 607H1728.500M1741.500 607H1744M1729 601L1730.500 602.500M1739.500 611.500L1741 613M1729 613L1730.500 611.500M1739.500 602.500L1741 601"/>
 <path d="M1751 612V606L1753 608L1755 603L1757 607L1759 602L1761 606L1763 603L1765 607L1768 605V612Z" fill="#a0a0a0" stroke="none"/><path d="M1751 613.500H1769"/>
 <rect x="1776.500" y="600.500" width="15" height="13"/><path d="M1776 613C1783 612 1783 601 1792 600M1781.500 601V613M1786.500 601V613M1777 607H1791" stroke="#8f8f8f"/>
 <rect x="1800.500" y="600.500" width="15" height="13" fill="#444"/><path d="M1801 613L1815 601" stroke="#ddd"/><path d="M1803 604H1808M1805.500 601.500V606.500M1809 610H1814"/>
 <path d="M1824 600H1840L1832 615Z" fill="url(#gv)" stroke="none"/><path d="M1828 603H1836L1832 610Z" fill="#6c6c6c" stroke="none"/>

 <rect x="1716.500" y="628.500" width="15" height="12" fill="#707070"/><path d="M1718 629v5M1721 629v5M1724 629v5M1727 629v5M1730 629v5" stroke="#ddd"/>
 <path d="M1746.500 627V640M1741 631H1752M1741 631L1739 637M1741 631L1744 637M1752 631L1750 637M1752 631L1755 637M1738 637C1739 640 1744 640 1745 637ZM1749 637C1750 640 1755 640 1756 637ZM1743 641H1750"/>
 <rect x="1764.500" y="628.500" width="15" height="12"/><rect x="1765" y="629" width="7" height="11" fill="#333" stroke="none"/><rect x="1772" y="629" width="7" height="11" fill="#bbb" stroke="none"/>
 <rect x="1787.500" y="627.500" width="12" height="10" fill="#9a9a9a"/><circle cx="1798" cy="638" r="4.500"/><path d="M1790 626h4"/>
 <circle cx="1820" cy="630" r="4" fill="#b0b0b0" stroke="none"/><circle cx="1816" cy="636" r="4" fill="#a0a0a0" stroke="none"/><circle cx="1824" cy="636" r="4" fill="#a0a0a0" stroke="none"/>
 <rect x="1836.500" y="628.500" width="15" height="12"/><path d="M1841.500 629V640M1846.500 629V640M1837 632.500H1851M1837 636.500H1851"/>

 <rect x="1728.500" y="655.500" width="15" height="13"/><path d="M1731 667C1733 660 1738 657 1742 657C1741 663 1736 667 1731 667Z" fill="#333"/>
 <rect x="1752.500" y="655.500" width="15" height="13" fill="#7c7c7c"/><path d="M1753 663L1762 656M1757 668L1767 660" stroke="#bbb" stroke-width="2.500"/>
 <rect x="1776.500" y="655.500" width="15" height="13" fill="#444"/><path d="M1777 665C1782 665 1782 660 1786 660C1788 660 1790 659 1791 657V661C1788 664 1786 664 1784 664C1782 667 1780 668 1777 668Z" fill="#bbb" stroke="none"/>
 <rect x="1800.500" y="655.500" width="15" height="13"/><path d="M1801 656L1815 668V656L1801 668Z" fill="#bbb" stroke="none"/>
 <rect x="1824.500" y="655.500" width="15" height="13" fill="url(#gh)"/>
</g>

<!-- layers row 1 -->
<use href="#ud" x="1746" y="714"/><use href="#ud" x="1787" y="742"/><circle cx="1694" cy="713" r="3.500" fill="none" stroke="#d0d0d0" stroke-width="1.400"/><path d="M1691 716L1688 719" stroke="#d0d0d0" stroke-width="1.500"/>
<g fill="none" stroke="#a8a8a8">
 <rect x="1775.500" y="709.500" width="12" height="10"/><path d="M1776 719L1780 714L1783 717L1785 715L1787 718" fill="#a8a8a8" stroke="none"/>
 <circle cx="1805" cy="714" r="5" fill="#a8a8a8" stroke="none"/><path d="M1805 709A5 5 0 0 0 1805 719Z" fill="#6a6a6a" stroke="none" transform="rotate(30 1805 714)"/>
 <rect x="1850.500" y="709.500" width="9" height="10"/><path d="M1850 708h2v2h-2zM1859 708h2v2h-2zM1850 718h2v2h-2zM1859 718h2v2h-2z" fill="#a8a8a8" stroke="none"/>
 <path d="M1877.500 708.500H1881L1883.500 711V720H1877.500Z" fill="none"/><path d="M1872 714h6v6h-6z" fill="#a8a8a8"/>
</g>
<text x="1823" y="720" font-size="15" font-weight="bold" fill="#a8a8a8" style="font-family:'Liberation Serif',serif">T</text>
<path d="M1901 741.500H1907L1904 745ZM1901 770.500H1907L1904 774Z" fill="#e0e0e0"/>
<!-- lock icons -->
<g>
 <path d="M1723 766h10v10h-10z" fill="#6a6a6a"/><path d="M1723 766h3.300v3.300h-3.300zM1729.600 766h3.300v3.300h-3.300zM1726.300 769.300h3.300v3.300h-3.300zM1723 772.600h3.300v3.300h-3.300zM1729.600 772.600h3.300v3.300h-3.300z" fill="#8e8e8e"/>
 <path d="M1759 764L1750 772C1748 773 1747 776 1743 776C1748 778 1752 776 1752 774L1760 765Z" fill="#7a7a7a"/>
 <path d="M1772 764V777M1766 770.500H1778M1770 766L1772 764L1774 766M1770 775L1772 777L1774 775M1768 768.500L1766 770.500L1768 772.500M1776 768.500L1778 770.500L1776 772.500" fill="none" stroke="#7f7f7f"/>
 <rect x="1790" y="770" width="10" height="8" fill="#a8a8a8"/><path d="M1792 770V767C1792 763 1798 763 1798 767V770" fill="none" stroke="#a8a8a8" stroke-width="1.500"/>
</g>
<!-- layer rows -->
<use href="#eye" x="1694" y="821"/><use href="#eye" x="1694" y="844"/><use href="#eye" x="1694" y="867"/>
<use href="#eye" x="1762" y="888"/><use href="#eye" x="1779" y="907"/><use href="#eye" x="1779" y="926"/><use href="#eye" x="1779" y="945"/><use href="#eye" x="1779" y="964"/><use href="#eye" x="1779" y="983"/>
<use href="#tr" x="1718" y="798"/><path d="M1713 818H1723L1718 824Z" fill="#e0e0e0"/><use href="#tr" x="1734" y="844"/><use href="#tr" x="1734" y="867"/>
<use href="#fold" x="1727" y="798"/><use href="#fold" x="1743" y="845"/><use href="#fold" x="1743" y="868"/>
<path d="M1727 817H1733L1734 815H1745V818H1748L1745 827H1725Z" fill="url(#gv)"/>
<text x="1877" y="873" font-size="14" font-style="italic" fill="#a8a8a8" style="font-family:'Liberation Serif',serif">fx</text>
<path d="M1895 866H1902L1898.500 861.500Z" fill="#dcdcdc"/>
<path d="M1908 796H1915L1911.500 792Z M1908 1010H1915L1911.500 1014Z" fill="#e0e0e0"/>
<!-- layer footer -->
<g fill="#a0a0a0">
 <path d="M1717 1027h5a3 3 0 0 1 0 6h-5a3 3 0 0 1 0-6zM1724 1027h5a3 3 0 0 1 0 6h-5a3 3 0 0 1 0-6zM1720 1030h6" fill="none" stroke="#7e7e7e" stroke-width="1.300"/>
 <path d="M1771 1025h13v11h-13z"/><circle cx="1777.500" cy="1030.500" r="3" fill="#3c3c3c"/>
 <circle cx="1803" cy="1030" r="5.500"/><path d="M1803 1024.500A5.500 5.500 0 0 0 1803 1035.500Z" fill="#666" transform="rotate(30 1803 1030)"/>
 <path d="M1812 1034l2 0 -1 1.500zM1758 1034l2 0 -1 1.500z" fill="#ccc"/>
 <path d="M1825 1024H1831L1833 1026H1838V1036H1825Z"/>
 <path d="M1853 1025H1863V1036H1858V1031H1853Z"/><path d="M1853 1031H1857.500V1036H1853Z" fill="#555"/>
 <path d="M1880 1024h4v1h4v2h-12v-2h4zM1877 1028h10v9h-10z"/><path d="M1880 1030v5M1882 1030v5M1884 1030v5" stroke="#555"/>
</g>
<text x="1745" y="1035" font-size="14" font-style="italic" fill="#a8a8a8" style="font-family:'Liberation Serif',serif">fx</text>
<!-- status icon -->
<circle cx="101" cy="1010.500" r="5.500" fill="#bbb"/><path d="M99 1007V1014H104V1011H102V1007Z" fill="#444"/>
<path d="M286 1006L294 1010.500L286 1015Z" fill="#e8e8e8"/>

<!-- ART -->
<use href="#art"/>
</svg>
</body></html>
